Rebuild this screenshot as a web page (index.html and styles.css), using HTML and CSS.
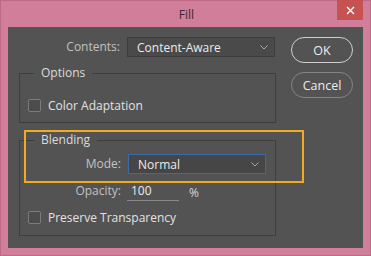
FILE: index.html
```html
<!DOCTYPE html>
<html>
<head>
<meta charset="utf-8">
<title>Fill</title>
<link rel="stylesheet" href="styles.css">
</head>
<body>
<div class="window">
  <div class="titlebar">
    <span></span>
    <span class="title">Fill</span>
    <div class="close">
      <svg width="9" height="9" viewBox="0 0 9 9"><path d="M1 1 L8 8 M8 1 L1 8" stroke="#fff" stroke-width="1.4" fill="none"/></svg>
    </div>
  </div>
  <div class="client">
    <div class="main">
      <div class="row contents-row">
        <span class="lbl">Contents:</span>
        <div class="select sel-contents">
          <span class="val">Content-Aware</span>
          <svg class="chev" width="8" height="5" viewBox="0 0 8 5"><path d="M0.5 0.5 L4 4 L7.5 0.5" stroke="#a8a8a8" stroke-width="1" fill="none"/></svg>
        </div>
      </div>
      <div class="group options">
        <div class="legend">Options</div>
        <div class="check-row first"><span class="box"></span><span class="check-lbl">Color Adaptation</span></div>
      </div>
      <div class="group blending">
        <div class="legend">Blending</div>
        <div class="row mode-row">
          <span class="lbl">Mode:</span>
          <div class="select sel-mode">
            <span class="val">Normal</span>
            <svg class="chev" width="8" height="5" viewBox="0 0 8 5"><path d="M0.5 0.5 L4 4 L7.5 0.5" stroke="#a8a8a8" stroke-width="1" fill="none"/></svg>
          </div>
        </div>
        <div class="row opacity-row">
          <span class="lbl">Opacity:</span>
          <div class="num">100</div>
          <span class="pct">%</span>
        </div>
        <div class="check-row last"><span class="box"></span><span class="check-lbl">Preserve Transparency</span></div>
      </div>
    </div>
    <div class="buttons">
      <div class="btn ok">OK</div>
      <div class="btn cancel">Cancel</div>
    </div>
    <div class="highlight"></div>
  </div>
</div>
</body>
</html>
```
FILE: styles.css
```css
* { box-sizing: border-box; }
html, body { margin: 0; padding: 0; }
body {
  width: 371px;
  height: 256px;
  overflow: hidden;
  font-family: "Open Sans", "Noto Sans", sans-serif;
  font-size: 12px;
}
.window {
  width: 371px;
  height: 256px;
  background: #d17e9a;
  border: 1px solid #bd6a86;
  display: flex;
  flex-direction: column;
  padding: 0 7px 7px 7px;
}
.titlebar {
  height: 26px;
  display: grid;
  grid-template-columns: 1fr auto 1fr;
  align-items: start;
}
.title {
  color: #3b2a31;
  font-size: 12px;
  line-height: 27px;
  padding-left: 2px;
}
.close {
  justify-self: end;
  width: 26px;
  height: 20px;
  background: #c75252;
  display: flex;
  align-items: center;
  justify-content: center;
  margin-top: -1px;
}
.client {
  position: relative;
  flex: 1;
  background: #535353;
  display: flex;
  padding: 10px 0 0 11px;
  color: #e4e4e4;
}
.main {
  width: 257px;
  display: flex;
  flex-direction: column;
}
.row {
  display: flex;
  align-items: center;
  height: 20px;
}
.lbl {
  width: 101px;
  text-align: right;
  color: #c2c2c2;
  margin-right: 7px;
  line-height: 20px;
}
.select {
  height: 20px;
  display: flex;
  align-items: center;
  justify-content: space-between;
  padding: 0 6px 0 9px;
  color: #ececec;
}
.sel-contents {
  width: 148px;
  background: #4a4a4a;
  border: 1px solid #3c3c3c;
}
.sel-mode {
  width: 138px;
  background: #464646;
  border: 1.5px solid #3b6aa6;
}
.chev { display: block; }
.group {
  border: 1px solid #3d3d3d;
  display: flex;
  flex-direction: column;
}
.options {
  margin-top: 16px;
  height: 50px;
}
.blending {
  margin-top: 17px;
  height: 96px;
}
.legend {
  align-self: flex-start;
  margin: -9px 0 0 14px;
  padding: 0 7px;
  height: 16px;
  line-height: 16px;
  background: #535353;
  color: #dcdcdc;
}
.check-row {
  display: flex;
  align-items: center;
  height: 16px;
  padding-left: 8px;
}
.check-row.first { margin-top: 16px; }
.check-row.last { margin-top: 8px; }
.box {
  width: 13px;
  height: 13px;
  border: 1px solid #7c7c7c;
  border-radius: 2px;
  background: #4c4c4c;
  margin-right: 7px;
}
.check-lbl { color: #e2e2e2; }
.mode-row { margin-top: 6px; }
.opacity-row { margin-top: 7px; }
.opacity-row .lbl { margin-right: 6px; }
.num {
  width: 52px;
  height: 20px;
  line-height: 20px;
  border-bottom: 1px solid #8a8a8a;
  padding-left: 4px;
  color: #ececec;
}
.pct {
  margin-left: 10px;
  margin-top: 3px;
  color: #d8d8d8;
}
.buttons {
  margin-left: 15px;
  display: flex;
  flex-direction: column;
  gap: 9px;
}
.btn {
  width: 62px;
  height: 26px;
  border-radius: 13px;
  display: flex;
  align-items: center;
  justify-content: center;
  color: #ececec;
  font-size: 12.5px;
}
.ok { border: 1.5px solid #cfcfcf; }
.cancel { border: 1px solid #858585; }
.highlight {
  position: absolute;
  left: 16px;
  top: 103px;
  width: 280px;
  height: 53px;
  border: 2px solid #f2aa1e;
  pointer-events: none;
}
```
